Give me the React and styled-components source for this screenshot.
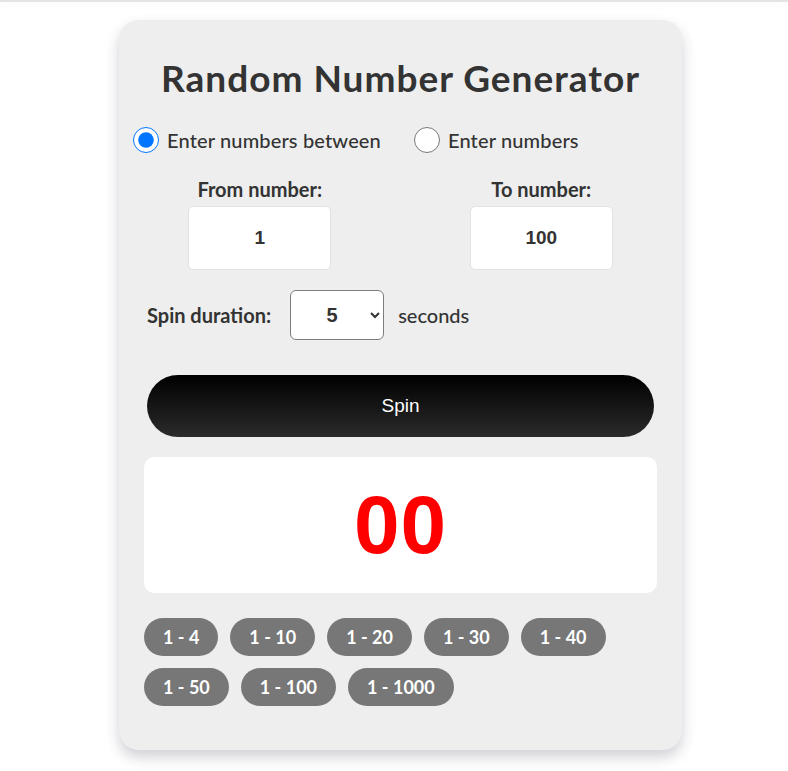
import React, { useState } from "react";
import styled, { createGlobalStyle } from "styled-components";

const Global = createGlobalStyle`
  html, body { margin: 0; padding: 0; background: #fff; }
  body { font-family: "Lato", "Liberation Sans", sans-serif; color: #333; }
  * { box-sizing: border-box; }
`;

const TopEdge = styled.div`
  height: 2px;
  background: #e4e4e7;
  box-shadow: 0 2px 10px rgba(0, 0, 0, 0.05);
`;

const Page = styled.div`
  display: flex;
  justify-content: center;
  padding: 18px 0 40px 13px;
`;

const Card = styled.div`
  width: 563px;
  background: #eeeeee;
  border-radius: 20px;
  padding: 30px 25px 44px;
  box-shadow: 0 7px 14px rgba(40, 40, 70, 0.22);
`;

const Title = styled.h1`
  margin: 0;
  text-align: center;
  font-family: "Lato", sans-serif;
  font-weight: 700;
  font-size: 37px;
  line-height: 56px;
  color: #333;
  letter-spacing: 1px;
`;

const RadioRow = styled.div`
  display: flex;
  align-items: center;
  gap: 33px;
  margin: 21px 0 0 -11px;
`;

const RadioLabel = styled.label`
  display: flex;
  align-items: center;
  gap: 8px;
  font-size: 20px;
  font-weight: 500;
  letter-spacing: 0.15px;
  color: #333;
`;

const Radio = styled.input`
  width: 26px;
  height: 26px;
  margin: 0;
`;

const RangeRow = styled.div`
  display: grid;
  grid-template-columns: 1fr 1fr;
  margin: 24px -25px 0;
`;

const Field = styled.div`
  display: flex;
  flex-direction: column;
  align-items: center;
  gap: 5px;
`;

const FieldLabel = styled.label`
  font-size: 20px;
  font-weight: 700;
  line-height: 24px;
  color: #333;
`;

const NumberInput = styled.input`
  width: 143px;
  height: 64px;
  border: 1px solid #e2e2e2;
  border-radius: 5px;
  background: #fff;
  text-align: center;
  font-family: "Liberation Sans", Arial, sans-serif;
  font-weight: 700;
  font-size: 19px;
  color: #333;
  outline: none;
`;

const DurationRow = styled.div`
  display: flex;
  align-items: center;
  margin-top: 20px;
  padding-left: 3px;
  font-size: 20px;
`;

const DurationLabel = styled.span`
  font-weight: 700;
  margin-right: 19px;
`;

const Select = styled.select`
  width: 94px;
  height: 50px;
  border: 1px solid #7d7d7d;
  border-radius: 6px;
  background: #fff;
  font-family: "Liberation Sans", Arial, sans-serif;
  font-weight: 700;
  font-size: 20px;
  color: #333;
  text-align: center;
  padding: 0 4px 0 6px;
  margin-right: 14px;
`;

const Seconds = styled.span`
  font-weight: 500;
`;

const SpinButton = styled.button`
  display: block;
  width: calc(100% - 6px);
  margin: 35px auto 0;
  height: 62px;
  border: none;
  border-radius: 31px;
  background: linear-gradient(to bottom, #000000, #2b2b2b);
  color: #fff;
  font-family: "Liberation Sans", Arial, sans-serif;
  font-size: 19px;
  cursor: pointer;
`;

const Result = styled.div`
  margin-top: 20px;
  height: 136px;
  background: #fff;
  border-radius: 10px;
  display: flex;
  align-items: center;
  justify-content: center;
  font-family: "Liberation Sans", Arial, sans-serif;
  font-weight: 700;
  font-size: 82px;
  letter-spacing: 1px;
  color: #ff0000;
`;

const Chips = styled.div`
  display: flex;
  flex-wrap: wrap;
  gap: 12px;
  margin-top: 25px;
`;

const Chip = styled.button`
  height: 38px;
  padding: 0 19px;
  border: none;
  border-radius: 19px;
  background: #777777;
  color: #fff;
  font-family: "Lato", sans-serif;
  font-weight: 700;
  font-size: 18px;
  cursor: pointer;
`;

const presets = [4, 10, 20, 30, 40, 50, 100, 1000];

export default function App() {
  const [mode, setMode] = useState("between");
  const [from, setFrom] = useState("1");
  const [to, setTo] = useState("100");
  const [dur, setDur] = useState("5");
  return (
    <>
      <Global />
      <TopEdge />
      <Page>
        <Card>
          <Title>Random Number Generator</Title>
          <RadioRow>
            <RadioLabel>
              <Radio
                type="radio"
                name="mode"
                checked={mode === "between"}
                onChange={() => setMode("between")}
              />
              Enter numbers between
            </RadioLabel>
            <RadioLabel>
              <Radio
                type="radio"
                name="mode"
                checked={mode === "list"}
                onChange={() => setMode("list")}
              />
              Enter numbers
            </RadioLabel>
          </RadioRow>
          <RangeRow>
            <Field>
              <FieldLabel>From number:</FieldLabel>
              <NumberInput value={from} onChange={(e) => setFrom(e.target.value)} />
            </Field>
            <Field>
              <FieldLabel>To number:</FieldLabel>
              <NumberInput value={to} onChange={(e) => setTo(e.target.value)} />
            </Field>
          </RangeRow>
          <DurationRow>
            <DurationLabel>Spin duration:</DurationLabel>
            <Select value={dur} onChange={(e) => setDur(e.target.value)}>
              {[1, 2, 3, 4, 5, 6, 7, 8, 9, 10].map((n) => (
                <option key={n} value={n}>
                  {n}
                </option>
              ))}
            </Select>
            <Seconds>seconds</Seconds>
          </DurationRow>
          <SpinButton>Spin</SpinButton>
          <Result>00</Result>
          <Chips>
            {presets.map((p) => (
              <Chip key={p}>1 - {p}</Chip>
            ))}
          </Chips>
        </Card>
      </Page>
    </>
  );
}
